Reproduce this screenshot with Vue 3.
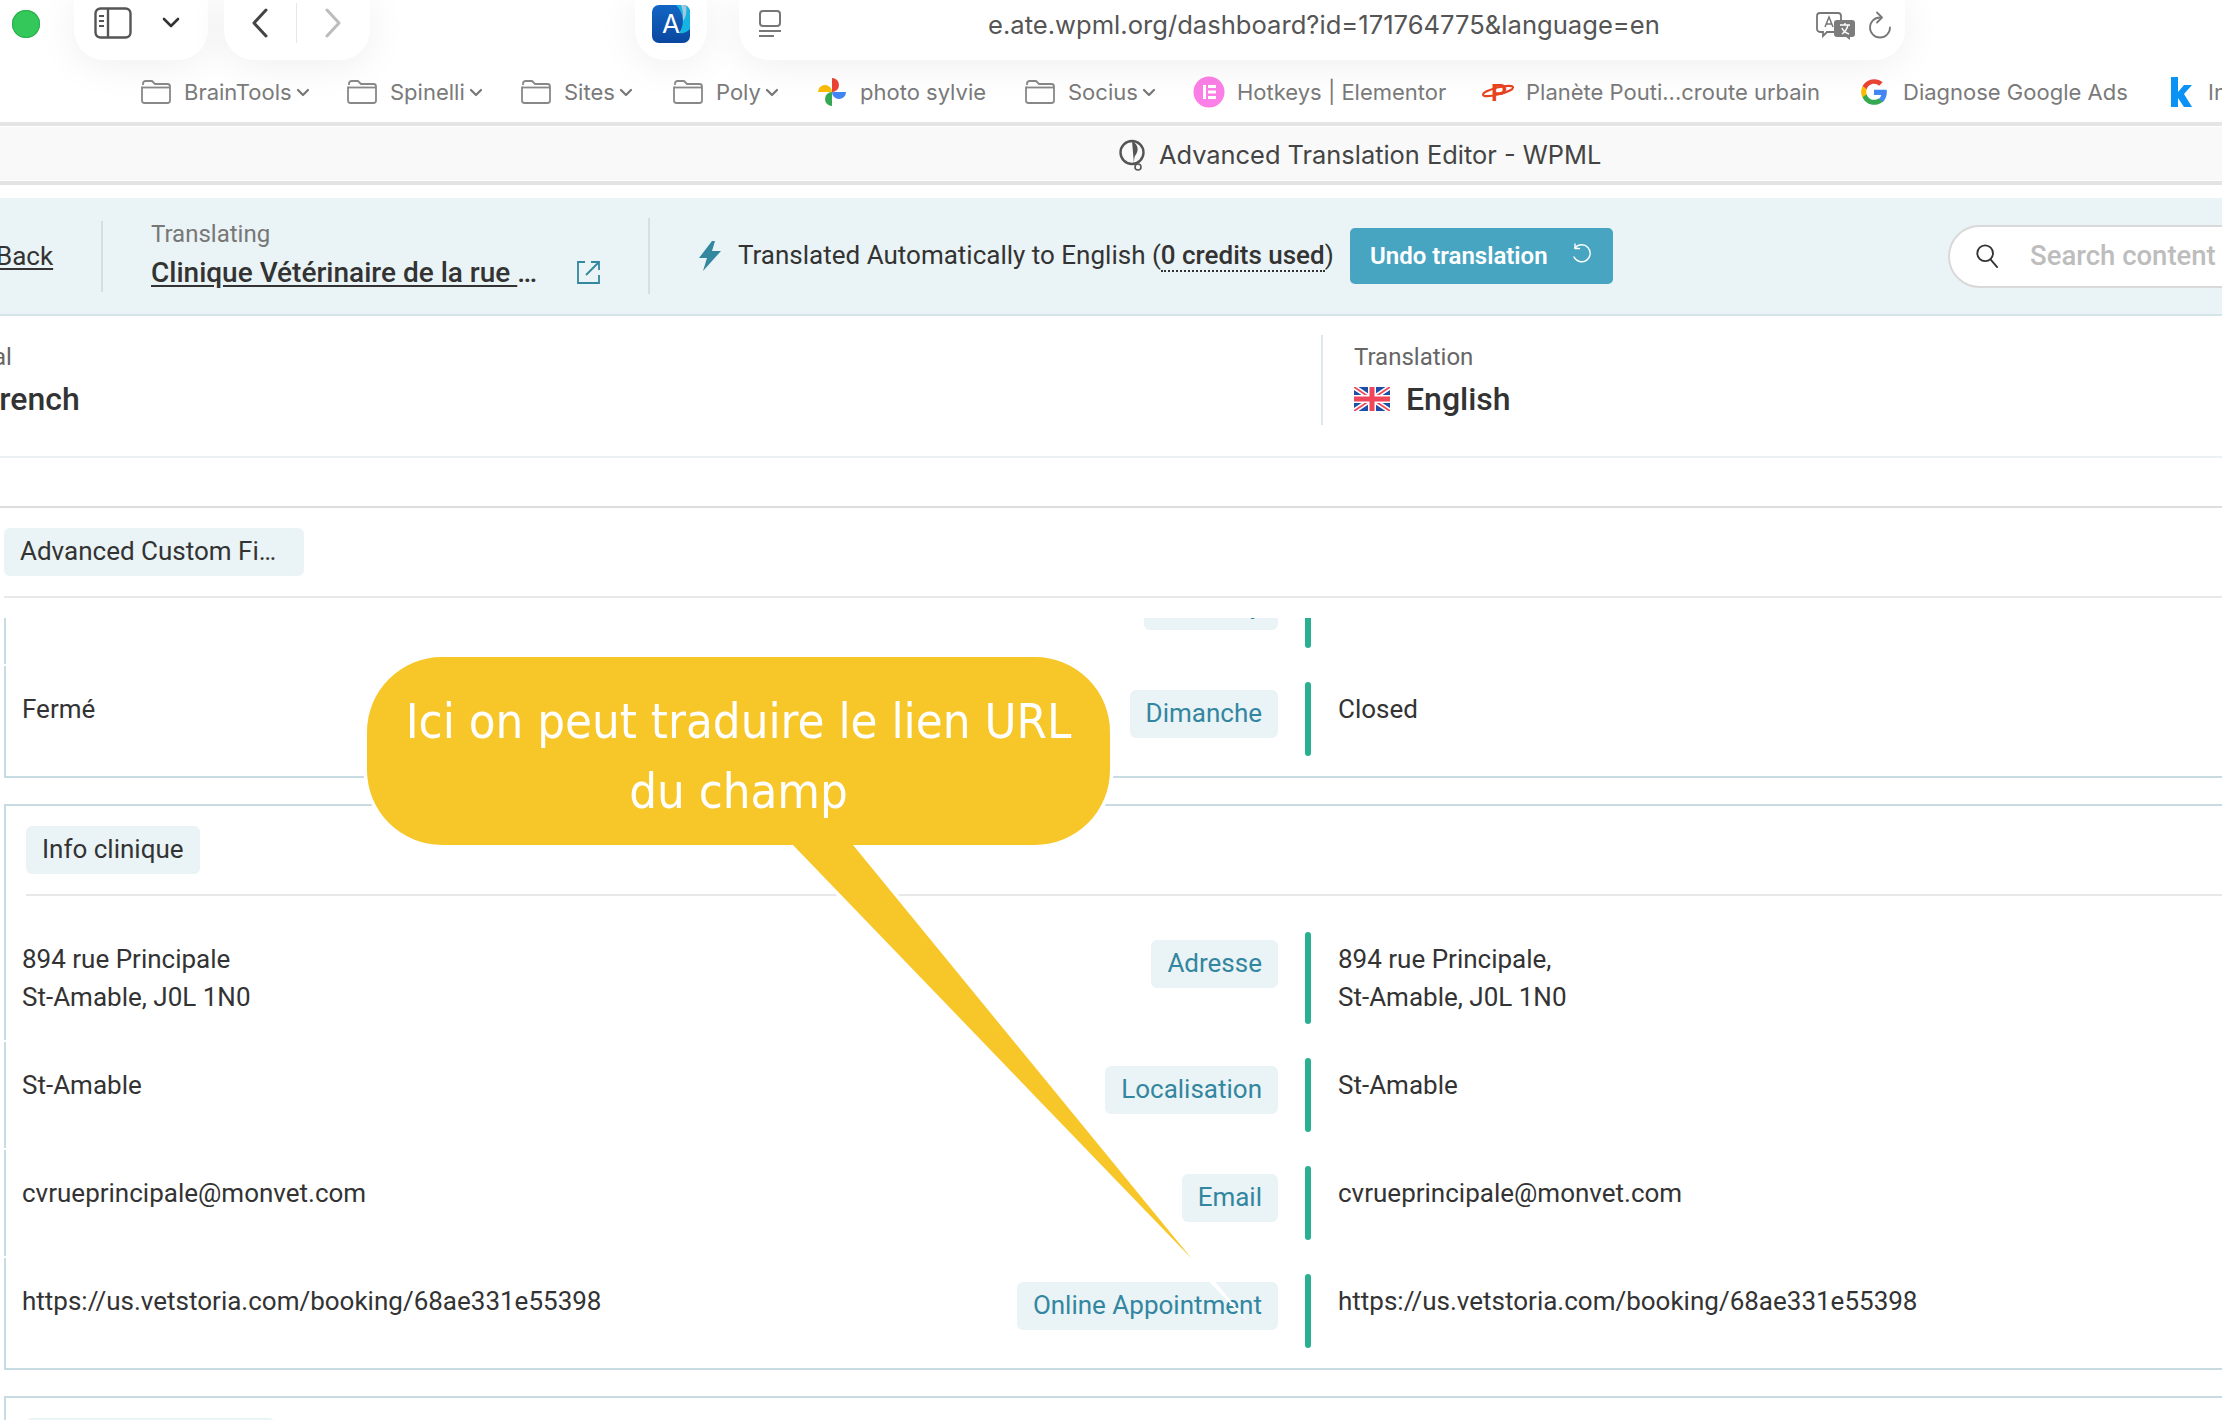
<script setup>
const bookmarks = [
  { type: 'folder', label: 'BrainTools', chevron: true, width: 206 },
  { type: 'folder', label: 'Spinelli', chevron: true, width: 174 },
  { type: 'folder', label: 'Sites', chevron: true, width: 152 },
  { type: 'folder', label: 'Poly', chevron: true, width: 144 },
  { type: 'photo', label: 'photo sylvie', width: 208 },
  { type: 'folder', label: 'Socius', chevron: true, width: 168 },
  { type: 'elementor', label: 'Hotkeys | Elementor', width: 288 },
  { type: 'planet', label: 'Planète Pouti...croute urbain', width: 379 },
  { type: 'google', label: 'Diagnose Google Ads', width: 310 },
  { type: 'k', label: 'Infos', width: 100 }
]
const topRows = [
  { label: 'Saturday', source: '', target: '' },
  { label: 'Dimanche', source: 'Fermé', target: 'Closed' }
]
const infoRows = [
  { label: 'Adresse', source: '894 rue Principale\nSt-Amable, J0L 1N0', target: '894 rue Principale,\nSt-Amable, J0L 1N0' },
  { label: 'Localisation', source: 'St-Amable', target: 'St-Amable' },
  { label: 'Email', source: 'cvrueprincipale@monvet.com', target: 'cvrueprincipale@monvet.com' },
  { label: 'Online Appointment', source: 'https://us.vetstoria.com/booking/68ae331e55398', target: 'https://us.vetstoria.com/booking/68ae331e55398' }
]
</script>

<template>
  <div class="page">
    <div class="toolbar">
      <span class="dot"></span>
      <div class="pill pill-side">
        <svg width="38" height="32" viewBox="0 0 38 32" fill="none" stroke="#555" stroke-width="2.4">
          <rect x="1.5" y="1.5" width="35" height="29" rx="5" />
          <path d="M14 2v28" />
          <path d="M5 9h5M5 14h5M5 19h5" stroke-width="2" />
        </svg>
        <svg class="side-chev" width="18" height="12" viewBox="0 0 18 12" fill="none" stroke="#333" stroke-width="2.6" stroke-linecap="round" stroke-linejoin="round">
          <path d="M2 2l7 7 7-7" />
        </svg>
      </div>
      <div class="pill pill-nav">
        <svg width="18" height="30" viewBox="0 0 18 30" fill="none" stroke="#444" stroke-width="3" stroke-linecap="round" stroke-linejoin="round">
          <path d="M15 2L3 15l12 13" />
        </svg>
        <span class="nav-sep"></span>
        <svg width="18" height="30" viewBox="0 0 18 30" fill="none" stroke="#bcbcbc" stroke-width="3" stroke-linecap="round" stroke-linejoin="round">
          <path d="M3 2l12 13L3 28" />
        </svg>
      </div>
      <div class="pill pill-app">
        <div class="app-icon">
          <svg class="app-swoosh" width="38" height="38" viewBox="0 0 38 38">
            <path d="M24 0h14v24c-4 4-8 5-11 4 6-8 5-20-3-28z" fill="#16b4e2" />
            <path d="M29 0h5c1 7 0 12-3 16 0-6 0-11-2-16z" fill="#a8c6dd" />
          </svg>
          <span class="app-a">A</span>
        </div>
      </div>
      <div class="pill pill-url">
        <svg class="reader" width="24" height="28" viewBox="0 0 24 28" fill="none" stroke="#777" stroke-width="2">
          <rect x="2" y="1" width="20" height="15" rx="3" />
          <path d="M1 21h22M1 26h15" />
        </svg>
        <span class="url">e.ate.wpml.org/dashboard?id=171764775&amp;language=en</span>
        <svg class="translate" width="40" height="28" viewBox="0 0 40 28">
          <path d="M4 1h18a3 3 0 0 1 3 3v13a3 3 0 0 1-3 3H11l-4 4v-4H4a3 3 0 0 1-3-3V4a3 3 0 0 1 3-3z" fill="#fff" stroke="#777" stroke-width="1.8" />
          <path d="M9 15l4-10 4 10M10.5 12h5" fill="none" stroke="#777" stroke-width="1.5" />
          <path d="M21 8h15a3 3 0 0 1 3 3v11a3 3 0 0 1-3 3h-2v3l-4-3h-9a3 3 0 0 1-3-3V11a3 3 0 0 1 3-3z" fill="#7c7c7c" />
          <path d="M24 13h10M29 11v2M26 22c3-2 5-5 6-9M26 16c1 3 4 5 7 6" fill="none" stroke="#fff" stroke-width="1.4" />
        </svg>
        <svg class="reload" width="24" height="28" viewBox="0 0 24 28" fill="none" stroke="#777" stroke-width="1.8" stroke-linecap="round" stroke-linejoin="round">
          <path d="M12 6.500a10 10 0 1 0 10 10" />
          <path d="M9 1.500l5 5-5 5" />
        </svg>
      </div>
    </div>

    <div class="bookmarks">
      <div v-for="b in bookmarks" :key="b.label" class="bm" :style="{ width: b.width + 'px' }">
        <svg v-if="b.type === 'folder'" width="30" height="24" viewBox="0 0 30 24" fill="none" stroke="#888" stroke-width="1.8">
          <path d="M2 5V3.500A2.500 2.500 0 0 1 4.500 1h6.500l3 3h12.500A2.500 2.500 0 0 1 29 6.500v14a2.500 2.500 0 0 1-2.500 2.500h-23A2.500 2.500 0 0 1 1 20.500V6.500" />
          <path d="M1 7.500h28" />
        </svg>
        <svg v-else-if="b.type === 'photo'" width="30" height="30" viewBox="0 0 30 30">
          <path d="M15 15V1a7 7 0 0 1 0 14z" fill="#ea4335" />
          <path d="M15 15h14a7 7 0 0 1-14 0z" fill="#4285f4" />
          <path d="M15 15v14a7 7 0 0 1 0-14z" fill="#34a853" />
          <path d="M15 15H1a7 7 0 0 1 14 0z" fill="#fbbc04" />
        </svg>
        <svg v-else-if="b.type === 'elementor'" width="32" height="32" viewBox="0 0 32 32">
          <circle cx="16" cy="16" r="15.500" fill="#fb7fe6" />
          <path d="M10 9h3v14h-3zM15 9h8v3h-8zM15 14.500h8v3h-8zM15 20h8v3h-8z" fill="#fff" />
        </svg>
        <svg v-else-if="b.type === 'planet'" width="34" height="28" viewBox="0 0 34 28">
          <ellipse cx="17" cy="13" rx="15.500" ry="3.500" transform="rotate(-14 17 13)" fill="none" stroke="#e8431f" stroke-width="2" />
          <text x="10" y="23" class="planet-p">P</text>
        </svg>
        <svg v-else-if="b.type === 'google'" width="28" height="28" viewBox="0 0 48 48">
          <path fill="#ea4335" d="M24 10c3.700 0 6.500 1.300 8.800 3.400l6-6C35.200 4 30 2 24 2 15.400 2 8 6.900 4.400 14.100l7 5.400C13.100 14 18 10 24 10z" />
          <path fill="#4285f4" d="M46 24.500c0-1.600-.1-3.100-.4-4.500H24v9h12.400c-.5 2.900-2.200 5.300-4.600 7l7 5.500C43.200 37.400 46 31.500 46 24.500z" />
          <path fill="#fbbc04" d="M11.400 28.500c-.4-1.400-.7-2.900-.7-4.500s.3-3.100.7-4.500l-7-5.400C2.900 17 2 20.400 2 24s.9 7 2.400 9.900l7-5.400z" />
          <path fill="#34a853" d="M24 46c6 0 11-2 14.800-5.500l-7-5.500c-2 1.300-4.500 2.200-7.800 2.200-6 0-10.900-4-12.600-9.500l-7 5.400C8 41.100 15.400 46 24 46z" />
        </svg>
        <svg v-else width="22" height="30" viewBox="0 0 22 30">
          <path d="M1 0h7v15l6-7h8l-8 9 8 13h-8l-6-9v9H1z" fill="#0a93f5" />
        </svg>
        <span class="bm-label" :class="'gap-' + b.type">{{ b.label }}</span>
        <svg v-if="b.chevron" class="bm-chev" width="14" height="9" viewBox="0 0 14 9" fill="none" stroke="#777" stroke-width="2.200" stroke-linecap="round" stroke-linejoin="round">
          <path d="M2 2l5 5 5-5" />
        </svg>
      </div>
    </div>

    <div class="titlebar">
      <svg width="28" height="32" viewBox="0 0 28 32" fill="none">
        <path d="M14 25a11.500 11.500 0 1 1 0-23 11.500 11.500 0 0 1 0 23z" stroke="#555" stroke-width="2.400" />
        <path d="M14 2c7 4 7 10 3 15-1 2-1 5-1 8z" fill="#555" />
        <circle cx="20" cy="28" r="3" stroke="#555" stroke-width="1.600" />
      </svg>
      <span>Advanced Translation Editor - WPML</span>
    </div>

    <div class="editbar">
      <a class="back">Back</a>
      <span class="vrule rule-back"></span>
      <div class="job">
        <div class="job-label">Translating</div>
        <div class="job-title"><span class="job-link">Clinique Vétérinaire de la rue </span>…</div>
      </div>
      <svg class="ext" width="24" height="24" viewBox="0 0 24 24" fill="none" stroke="#33879f" stroke-width="1.800">
        <path d="M8 2H1v21h21v-8" />
        <path d="M9 15L22 2M14 2h8v8" />
      </svg>
      <span class="vrule rule-job"></span>
      <svg class="bolt" width="24" height="30" viewBox="0 0 24 30">
        <path d="M14 0L1 17h8L5 30l18-20h-9l3-10z" fill="#33879f" />
      </svg>
      <span class="auto">Translated Automatically to English (<span class="credits">0 credits used</span>)</span>
      <button class="undo">
        <span>Undo translation</span>
        <svg class="undo-icon" width="22" height="22" viewBox="0 0 22 22" fill="none" stroke="#fff" stroke-width="1.400" stroke-linecap="round" stroke-linejoin="round">
          <path d="M5 5a8.500 8.500 0 1 1-1 9" />
          <path d="M5 1v4.500h4.500" />
        </svg>
      </button>
      <div class="search">
        <svg width="24" height="26" viewBox="0 0 26 28" fill="none" stroke="#333" stroke-width="2" stroke-linecap="round">
          <circle cx="11" cy="11" r="8.500" />
          <path d="M17 18l7 8" />
        </svg>
        <span>Search content</span>
      </div>
    </div>

    <div class="langs">
      <div class="lang-col lang-src">
        <div class="lang-label clip-label">Original</div>
        <div class="lang-value clip-value">French</div>
      </div>
      <div class="lang-col lang-tgt">
        <div class="lang-label">Translation</div>
        <div class="lang-value">
          <svg width="36" height="24" viewBox="0 0 36 24">
            <rect width="36" height="24" fill="#1e4fa8" />
            <path d="M0 0l36 24M36 0L0 24" stroke="#fff" stroke-width="5" />
            <path d="M0 0l36 24M36 0L0 24" stroke="#f0455a" stroke-width="1.800" />
            <path d="M18 0v24M0 12h36" stroke="#fff" stroke-width="8" />
            <path d="M18 0v24M0 12h36" stroke="#f0455a" stroke-width="5" />
          </svg>
          <span>English</span>
        </div>
      </div>
    </div>

    <div class="filters">
      <span class="filter-chip">Advanced Custom Fi…</span>
      <div class="filter-line"></div>
    </div>

    <div class="scroll">
      <section class="group group-first">
        <div v-for="r in topRows" :key="r.label" class="row">
          <div class="source"><span class="text">{{ r.source }}</span><span class="chip">{{ r.label }}</span></div>
          <span class="bar"></span>
          <span class="text">{{ r.target }}</span>
        </div>
      </section>
      <section class="group">
        <div class="group-head">
          <span class="head-chip">Info clinique</span>
          <div class="head-line"></div>
        </div>
        <div v-for="r in infoRows" :key="r.label" class="row">
          <div class="source"><span class="text">{{ r.source }}</span><span class="chip">{{ r.label }}</span></div>
          <span class="bar"></span>
          <span class="text">{{ r.target }}</span>
        </div>
      </section>
      <section class="group">
        <div class="group-head">
          <span class="head-chip next-chip"></span>
        </div>
      </section>
    </div>

    <div class="callout">
      <svg class="callout-shape" width="900" height="680" viewBox="0 0 900 680">
        <path d="M105 20H698a75 75 0 0 1 75 75V133a75 75 0 0 1-75 75H516L855 622L456 208H105a75 75 0 0 1-75-75V95a75 75 0 0 1 75-75z"
          fill="#f7c729" stroke="#fff" stroke-width="7" stroke-miterlimit="100" paint-order="stroke" />
      </svg>
      <p class="callout-text">Ici on peut traduire le lien URL<br />du champ</p>
    </div>
  </div>
</template>

<style>
html, body { margin: 0; background: #fff; }
</style>

<style scoped>
.page { position: relative; width: 2222px; height: 1420px; overflow: hidden; background: #fff; font-family: Roboto, "Liberation Sans", sans-serif; color: #333; }
.toolbar { display: flex; height: 60px; padding-left: 12px; }
.dot { width: 28px; height: 28px; margin-top: 10px; border-radius: 50%; background: #34c759; box-shadow: inset 0 0 0 1px #2aae4b; }
.pill { height: 60px; display: flex; align-items: center; background: #fff; border-radius: 0 0 30px 30px; box-shadow: 0 4px 40px rgba(0,0,0,.07); box-sizing: border-box; }
.pill-side { width: 134px; margin-left: 34px; padding: 0 0 14px 20px; }
.side-chev { margin-left: 30px; }
.pill-nav { width: 146px; margin-left: 16px; padding: 0 0 14px 27px; }
.nav-sep { width: 1px; height: 40px; margin: 0 27px 0 27px; background: #e8e8e8; }
.pill-app { width: 72px; margin-left: 265px; padding: 0 0 12px 17px; }
.app-icon { position: relative; width: 38px; height: 38px; border-radius: 7px; overflow: hidden; background: linear-gradient(#1366c4, #0a47a0); display: flex; align-items: center; justify-content: center; }
.app-swoosh { position: absolute; inset: 0; }
.app-a { position: relative; color: #fff; font: 400 26px "Liberation Sans Narrow", Inter, sans-serif; line-height: 38px; }
.pill-url { position: relative; width: 1166px; margin-left: 32px; padding-bottom: 12px; }
.reader { margin-left: 19px; }
.url { margin-left: 206px; font: 400 25.6px Inter, sans-serif; color: #555; white-space: nowrap; }
.translate { position: absolute; left: 1077px; top: 12px; }
.reload { position: absolute; left: 1129px; top: 11px; }
.bookmarks { display: flex; align-items: center; height: 62px; padding: 2px 0 0 141px; background: #fff; overflow: hidden; box-sizing: border-box; }
.bm { flex: none; display: flex; align-items: center; }
.bm svg { flex: none; }
.bm-label { margin-left: 13px; font: 400 22px Inter, sans-serif; color: #7a7a7a; white-space: nowrap; }
.gap-elementor { margin-left: 12px; }
.gap-planet { margin-left: 11px; }
.gap-google { margin-left: 15px; }
.gap-k { margin-left: 16px; }
.bm-chev { margin-left: 4px; }
.planet-p { font: 700 24px "Liberation Sans", sans-serif; fill: #e8431f; }
.titlebar { display: flex; align-items: center; gap: 13px; box-sizing: content-box; height: 53px; padding: 2px 0 0 1118px; border-top: 4px solid #e5e5e5; border-bottom: 4px solid #e3e3e3; box-shadow: inset 0 1px 0 #fff, inset 0 -1px 0 #fff; background: #f9f9f9; font: 400 25.4px Inter, sans-serif; color: #444; }
.editbar { display: flex; align-items: center; height: 116px; margin-top: 13px; border-bottom: 2px solid #d5e4e9; background: #eaf3f5; }
.back { flex: none; width: 57px; margin-left: -4px; font-size: 26px; color: #333; text-decoration: underline; text-underline-offset: 3px; }
.vrule { flex: none; width: 2px; background: #d2e0e5; }
.rule-back { height: 71px; margin-left: 48px; }
.job { flex: none; width: 400px; margin: -2px 0 0 48px; }
.job-label { font-size: 24px; line-height: 30px; color: #777; }
.job-title { margin-top: 6px; font-size: 28px; font-weight: 500; line-height: 36px; color: #333; white-space: nowrap; }
.job-link { text-decoration: underline; text-underline-offset: 3px; }
.ext { flex: none; margin: 32px 0 0 26px; }
.rule-job { height: 76px; margin-left: 47px; }
.bolt { flex: none; margin-left: 48px; }
.auto { flex: none; margin: -2px 0 0 16px; width: 596px; font-size: 26px; white-space: nowrap; color: #333; }
.credits { font-weight: 500; border-bottom: 2px dotted #333; }
.undo { flex: none; display: flex; align-items: center; justify-content: space-between; box-sizing: border-box; width: 263px; height: 56px; margin-left: 16px; padding: 0 21px 0 20px; border: 0; border-radius: 5px; background: #48a5c1; color: #fff; font: 600 24px Roboto, sans-serif; }
.undo-icon { margin-top: -4px; }
.search { flex: none; display: flex; align-items: center; box-sizing: border-box; width: 400px; height: 63px; margin-left: 335px; padding-left: 25px; border: 2px solid #d9d9d9; border-radius: 32px; background: #fff; font-size: 27.5px; font-weight: 500; color: #bdbdbd; }
.search span { margin: -2px 0 0 31px; white-space: nowrap; }
.langs { display: flex; height: 140px; border-bottom: 2px solid #eaf2f4; }
.lang-col { box-sizing: border-box; height: 90px; margin-top: 19px; }
.lang-src { width: 1321px; overflow: hidden; }
.lang-tgt { border-left: 2px solid #dfe9ec; padding-left: 31px; }
.lang-label { margin-top: 6px; font-size: 24px; line-height: 32px; color: #666; white-space: nowrap; }
.lang-value { display: flex; align-items: center; gap: 16px; margin-top: 4px; font-size: 32px; font-weight: 500; line-height: 44px; color: #333; white-space: nowrap; }
.clip-label { margin-left: -70px; }
.clip-value { margin-left: -18px; }
.filters { box-sizing: content-box; height: 88px; padding: 0 0 0 4px; margin-top: 48px; border-top: 2px solid #ddd; }
.filter-chip { display: block; box-sizing: border-box; width: 300px; height: 48px; margin-top: 20px; padding-left: 16px; border-radius: 6px; background: #eaf3f6; font-size: 26px; line-height: 46px; color: #333; }
.filter-line { height: 2px; margin-top: 20px; background: #e9e9e9; }
.scroll { height: 802px; margin-top: 22px; overflow: hidden; }
.group { box-sizing: border-box; width: 2400px; margin: 0 0 26px 4px; border-top: 2px solid #c8dbe2; border-bottom: 2px solid #c8dbe2; }
.group-first { margin-top: -60px; border-top: 0; }
.row { display: grid; grid-template-columns: 1272px 6px 1fr; column-gap: 27px; box-sizing: border-box; padding: 16px 0; border-left: 2px solid #c8dbe2; margin-bottom: 2px; }
.row:last-child { margin-bottom: 0; padding-bottom: 20px; }
.source { display: flex; justify-content: space-between; align-items: flex-start; padding-left: 16px; }
.text { padding: 8px 0; font-size: 26px; line-height: 38px; color: #333; white-space: pre-line; }
.chip { flex: none; height: 48px; margin-top: 8px; padding: 0 16px; border-radius: 6px; background: #eaf3f6; font-size: 26px; line-height: 46px; color: #33869f; }
.bar { min-height: 74px; border-radius: 3px; background: #2aaf92; }
.group-head { padding: 20px 0 20px 20px; border-left: 2px solid #c8dbe2; }
.head-chip { display: inline-block; height: 48px; padding: 0 16px; border-radius: 6px; background: #eaf3f6; font-size: 26px; line-height: 46px; color: #333; vertical-align: top; }
.next-chip { width: 249px; box-sizing: border-box; }
.head-line { height: 2px; margin-top: 20px; background: #e8e8e8; }
.callout { position: absolute; left: 337px; top: 637px; width: 900px; height: 680px; }
.callout-shape { display: block; overflow: visible; }
.callout-text { position: absolute; left: 30px; top: 20px; width: 743px; height: 188px; margin: 0; padding-top: 29px; box-sizing: border-box; text-align: center; font: 400 48.7px/70px "DejaVu Sans Condensed", "DejaVu Sans", sans-serif; color: #fff; }
</style>
